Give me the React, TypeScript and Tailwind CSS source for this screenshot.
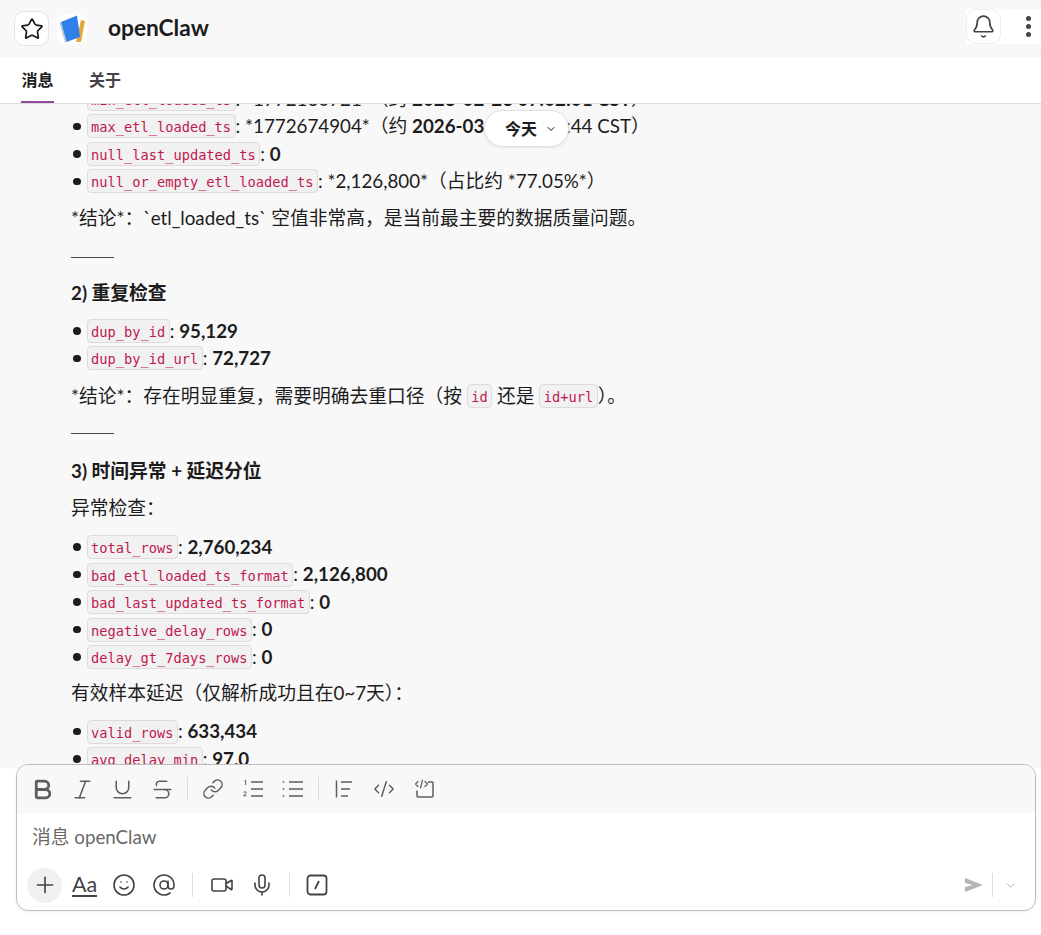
import React from "react";
import { Star, Bell, Bold, Italic, Underline, Strikethrough, Link, CodeXml, Smile, AtSign, Video, Mic, Plus, ChevronDown } from "lucide-react";

const C = ({ children }: { children: React.ReactNode }) => (
  <code className="relative -top-[2px] inline-block h-[24px] rounded-[4px] border border-[#dcdcdc] bg-[#f1f1f1] px-[3.5px] align-middle font-['DejaVu_Sans_Mono',monospace] text-[13.7px] leading-[25px] text-[#c0194f]">
    {children}
  </code>
);

const Li = ({ children }: { children: React.ReactNode }) => (
  <li className="flex h-[27.5px] items-center">
    <span className="mr-[6px] ml-[2px] h-[7.5px] w-[7.5px] rounded-full bg-[#1d1c1d]" />
    <span className="whitespace-pre">{children}</span>
  </li>
);

const Hr = () => <div className="h-px w-[43px] bg-[#4a4a4a]" />;
const IconBtn = ({ children }: { children: React.ReactNode }) => (
  <span className="flex h-[24px] w-[24px] items-center justify-center">{children}</span>
);
const Sep = () => <span className="-mx-[3px] h-[24px] w-px bg-[#dddddd]" />;
const Sep2 = () => <span className="block h-[24px] w-px bg-[#dddddd]" />;

export default function App() {
  return (
    <div className="flex h-[935px] w-[1041px] flex-col overflow-hidden bg-white font-['Lato','Noto_Sans_CJK_SC',sans-serif] text-[18.75px] text-[#1d1c1d]">
      <header className="flex h-[57px] shrink-0 items-center bg-[#f8f8f8] pl-[14px]">
        <span className="flex h-[35px] w-[35px] items-center justify-center rounded-[10px] border border-[#e4e4e4] bg-white">
          <Star size={24} strokeWidth={1.7} color="#1d1c1d" />
        </span>
        <span className="ml-[8px] flex h-[30px] w-[30px] items-center justify-center overflow-hidden rounded-[8px] bg-white">
          <svg width="30" height="30" viewBox="0 0 30 30">
            <path d="M24 6l4 1-4 21-5 0z" fill="#e3a93c" />
            <path d="M2.500 9L4 8.300 9.700 28 8 28.500z" fill="#b9c4d4" />
            <path d="M4 8L20 1.500 23 23 9.700 28z" fill="#2f80e8" />
          </svg>
        </span>
        <h1 className="ml-[21px] text-[22.7px] font-bold">openClaw</h1>
        <div className="ml-auto mt-[9px] flex h-[35px] w-[75px] items-center self-start bg-white">
          <span className="flex h-[35px] w-[35px] items-center justify-center rounded-[10px] border border-[#eeeeee]">
            <Bell size={25} strokeWidth={1.6} color="#454245" />
          </span>
          <span className="ml-[25px] flex flex-col gap-[3px]">
            <i className="h-[5px] w-[5px] rounded-full bg-[#454245]" />
            <i className="h-[5px] w-[5px] rounded-full bg-[#454245]" />
            <i className="h-[5px] w-[5px] rounded-full bg-[#454245]" />
          </span>
        </div>
      </header>

      <nav className="flex h-[47px] shrink-0 border-b border-[#dddddd] bg-white pl-[21px] text-[16px] font-bold">
        <span className="relative flex w-[33px] items-center justify-center">
          消息
          <span className="absolute bottom-0 left-0 h-[2px] w-[33px] bg-[#8f4a9b]" />
        </span>
        <span className="ml-[35px] flex items-center text-[#454245]">关于</span>
      </nav>

      <main className="relative h-[664px] shrink-0 overflow-hidden bg-[#f8f8f8] pl-[71px]">
        <div className="-mt-[19px] flex flex-col">
          <ul className="flex flex-col">
            <Li><C>min_etl_loaded_ts</C>: *1772160721*（约 <b>2026-02-26 07:02:01 CST</b>）</Li>
            <Li><C>max_etl_loaded_ts</C>: *1772674904*（约 <b>2026-03-05 09:41</b>:44 CST）</Li>
            <Li><C>null_last_updated_ts</C>: <b>0</b></Li>
            <Li><C>null_or_empty_etl_loaded_ts</C>: *2,126,800*（占比约 *77.05%*）</Li>
          </ul>
          <p className="mt-[9px] leading-[27px]">*结论*：`etl_loaded_ts` 空值非常高，是当前最主要的数据质量问题。</p>
          <div className="mt-[26px]"><Hr /></div>
          <h2 className="mt-[21px] font-bold leading-[27px]">2) 重复检查</h2>
          <ul className="mt-[11px] flex flex-col">
            <Li><C>dup_by_id</C>: <b>95,129</b></Li>
            <Li><C>dup_by_id_url</C>: <b>72,727</b></Li>
          </ul>
          <p className="mt-[10px] leading-[27px]">*结论*：存在明显重复，需要明确去重口径（按 <C>id</C> 还是 <C>id+url</C>）。</p>
          <div className="mt-[23px]"><Hr /></div>
          <h2 className="mt-[23px] font-bold leading-[27px]">3) 时间异常 + 延迟分位</h2>
          <p className="mt-[10px] leading-[27px]">异常检查：</p>
          <ul className="mt-[12px] flex flex-col">
            <Li><C>total_rows</C>: <b>2,760,234</b></Li>
            <Li><C>bad_etl_loaded_ts_format</C>: <b>2,126,800</b></Li>
            <Li><C>bad_last_updated_ts_format</C>: <b>0</b></Li>
            <Li><C>negative_delay_rows</C>: <b>0</b></Li>
            <Li><C>delay_gt_7days_rows</C>: <b>0</b></Li>
          </ul>
          <p className="mt-[8px] leading-[27px]">有效样本延迟（仅解析成功且在0~7天）：</p>
          <ul className="mt-[12px] flex flex-col">
            <Li><C>valid_rows</C>: <b>633,434</b></Li>
            <Li><C>avg_delay_min</C>: <b>97.0</b></Li>
          </ul>
        </div>
        <button className="absolute left-[484px] top-[6px] flex h-[37px] w-[85px] items-center gap-[8px] rounded-full border border-[#e0e0e0] bg-white pl-[20px] text-[16px] font-bold shadow-[0_1px_3px_rgba(0,0,0,0.08)]">
          今天 <ChevronDown size={12} strokeWidth={2} />
        </button>
      </main>

      <section className="relative z-10 mx-[16px] -mt-[4px] h-[147px] w-[1020px] shrink-0 overflow-hidden rounded-[12px] border border-[#bdbdbd] bg-white shadow-[0_1px_3px_rgba(0,0,0,0.06)]">
        <div className="flex h-[48px] items-center gap-[16px] bg-[#f8f8f8] pl-[13px] text-[#5e5d60]">
          <IconBtn><Bold size={25} strokeWidth={2.7} className="shrink-0" /></IconBtn>
          <IconBtn><Italic size={25} strokeWidth={1.5} className="shrink-0" /></IconBtn>
          <IconBtn><Underline size={25} strokeWidth={1.5} className="shrink-0" /></IconBtn>
          <IconBtn><Strikethrough size={25} strokeWidth={1.5} className="shrink-0" /></IconBtn>
          <Sep />
          <IconBtn><Link size={22} strokeWidth={1.6} /></IconBtn>
          <IconBtn>
            <svg width="22" height="20" viewBox="0 0 22 20" fill="none" stroke="currentColor" strokeWidth="1.5">
              <path d="M9 3h12M9 10h12M9 17h12" />
              <path d="M2.500 2l1.200-.7V6M1.500 13.500c.5-1.200 2.800-1 2.700.3 0 1-2 1.700-2.800 3h3" strokeWidth="1" />
            </svg>
          </IconBtn>
          <IconBtn>
            <svg width="22" height="20" viewBox="0 0 22 20" fill="none" stroke="currentColor" strokeWidth="1.5">
              <path d="M7 3h14M7 10h14M7 17h14" />
              <path d="M1.500 2.200v1.600M1.500 9.200v1.600M1.500 16.200v1.600" />
            </svg>
          </IconBtn>
          <Sep />
          <IconBtn>
            <svg width="20" height="20" viewBox="0 0 20 20" fill="none" stroke="currentColor" strokeWidth="1.5">
              <path d="M2.500 1.500v17M7 3h11M7 10h9M7 17h7" />
            </svg>
          </IconBtn>
          <IconBtn><CodeXml size={22} strokeWidth={1.6} /></IconBtn>
          <IconBtn>
            <svg width="22" height="22" viewBox="0 0 22 22" fill="none" stroke="currentColor" strokeWidth="1.5" strokeLinecap="round" strokeLinejoin="round">
              <path d="M15.500 4H19a1 1 0 0 1 1 1v13a1 1 0 0 1-1 1H5a1 1 0 0 1-1-1v-5" />
              <path d="M5 3.500 2.500 6 5 8.500M12 3.500 14.500 6 12 8.500M9.500 2 7.500 10" strokeWidth="1.200" />
            </svg>
          </IconBtn>
        </div>
        <div className="flex h-[50px] items-center pb-[1px] pl-[15px] text-[18.75px] text-[#696969]">消息 openClaw</div>
        <div className="flex h-[44px] items-center pl-[10px] text-[#454245]">
          <span className="flex h-[35px] w-[35px] items-center justify-center rounded-full bg-[#f0f0f0]"><Plus size={26} strokeWidth={1.5} /></span>
          <span className="ml-[10px] border-b-2 border-[#454245] text-[21.500px] leading-[22px]">Aa</span>
          <span className="ml-[15px] flex"><Smile size={24} strokeWidth={1.6} /></span>
          <span className="ml-[16px] flex"><AtSign size={24} strokeWidth={1.6} /></span>
          <span className="ml-[16px]"><Sep2 /></span>
          <span className="ml-[17px] flex"><Video size={24} strokeWidth={1.6} /></span>
          <span className="ml-[16px] flex"><Mic size={24} strokeWidth={1.6} /></span>
          <span className="ml-[15px]"><Sep2 /></span>
          <span className="ml-[15px] flex">
            <svg width="24" height="24" viewBox="0 0 24 24" fill="none" stroke="currentColor" strokeWidth="1.800">
              <rect x="2.500" y="2.500" width="19" height="19" rx="3" />
              <path d="M14 8l-4 8" />
            </svg>
          </span>
          <span className="ml-auto flex items-center pr-[18px] text-[#a0a0a0]">
            <svg width="18" height="16" viewBox="0 0 18 16" fill="#b5b5b5"><path d="M0 1l18 7-18 7v-5l8-2-8-2z" /></svg>
            <span className="ml-[9px] h-[24px] w-px bg-[#dddddd]" />
            <ChevronDown size={13} strokeWidth={1.6} className="ml-[11px]" />
          </span>
        </div>
      </section>
    </div>
  );
}
